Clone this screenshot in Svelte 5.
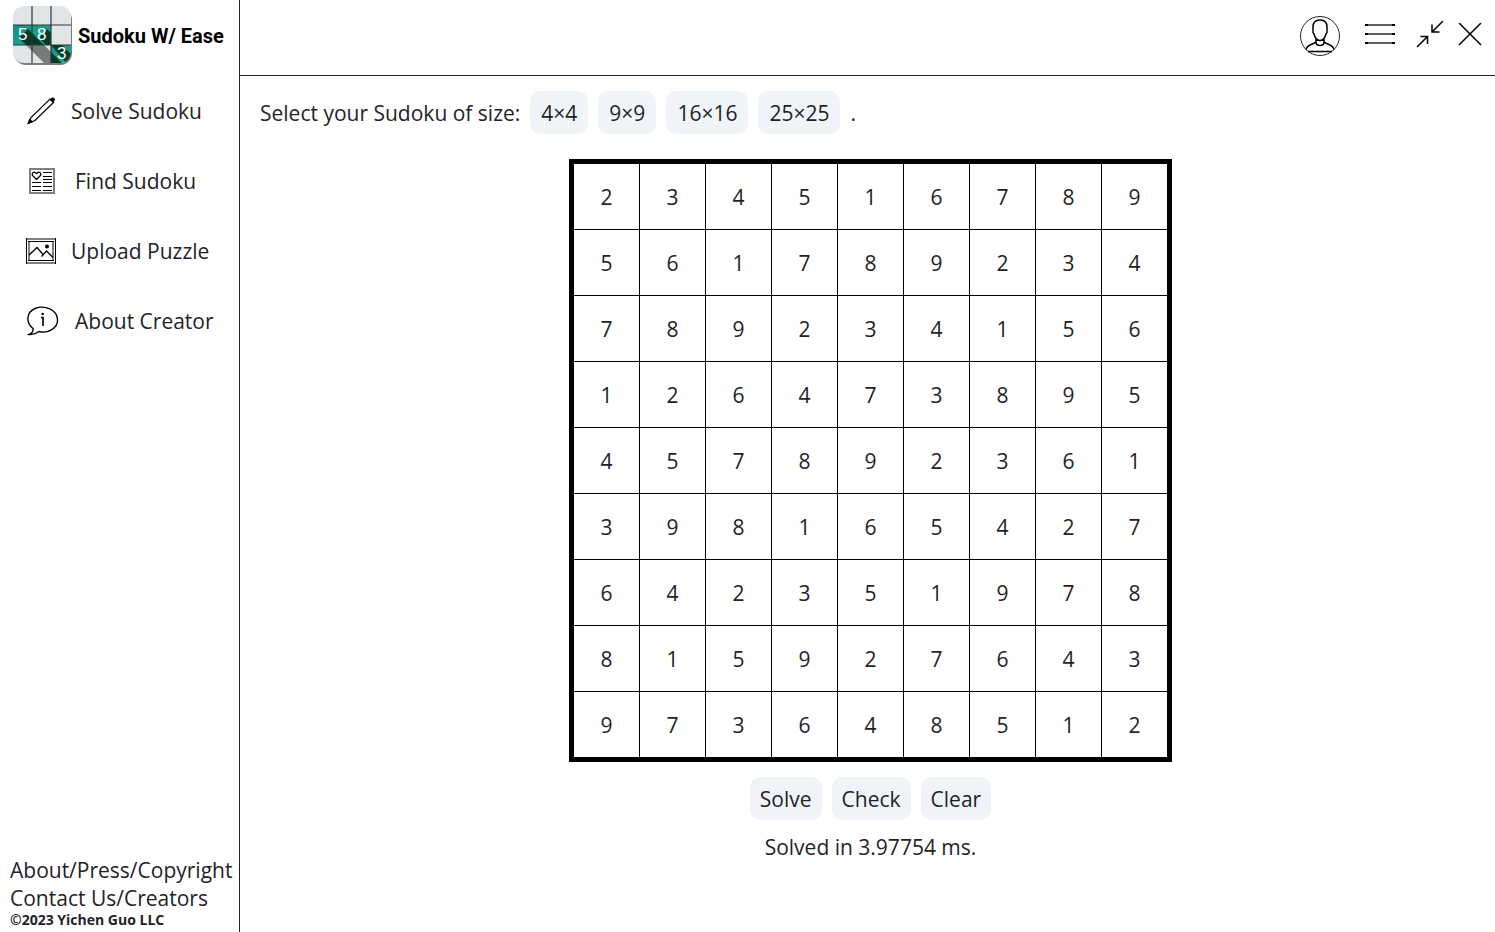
<script>
  const sizes = [4, 9, 16, 25];
  const actions = ['Solve', 'Check', 'Clear'];
  const board = [
    '234516789',
    '561789234',
    '789234156',
    '126473895',
    '457892361',
    '398165427',
    '642351978',
    '815927643',
    '973648512'
  ].map((row) => row.split(''));
</script>

<div class="app">
  <aside class="sidebar">
    <a class="brand" href="#home">
      <svg class="logo" viewBox="0 0 62 62" aria-hidden="true">
        <defs>
          <clipPath id="tile"><rect x="1" y="1" width="58" height="57" rx="11" /></clipPath>
          <linearGradient id="teal" x1="0" y1="0" x2="1" y2="1">
            <stop offset="0" stop-color="#129080" />
            <stop offset="1" stop-color="#20ad9b" />
          </linearGradient>
        </defs>
        <rect x="2" y="3" width="58" height="57" rx="12" fill="#777b7b" />
        <g clip-path="url(#tile)">
          <rect width="62" height="62" fill="#e1e5e6" />
          <rect x="0" y="20" width="39" height="20" fill="url(#teal)" />
          <rect x="39" y="40" width="20" height="20" fill="url(#teal)" />
          <path d="M7 33L16 24L32 40H14Z M27 33L35 24L39 28V40H34Z" fill="#073a24" />
          <path d="M14 40H32L51 59H33Z" fill="#777b7b" />
          <path d="M39 40H50L60 50V59H55Z M45 53L51 59H39V47Z" fill="#063d25" />
          <path d="M20 0V60M39 0V60M0 20H60M0 40H60" stroke="#303638" stroke-width="1.2" />
        </g>
        <g class="digits">
          <text x="6" y="35">5</text>
          <text x="25" y="35">8</text>
          <text x="45" y="54">3</text>
        </g>
      </svg>
      <span>Sudoku W/ Ease</span>
    </a>

    <nav>
      <a href="#solve">
        <svg width="31" height="30" viewBox="0 0 31 30" aria-hidden="true">
          <path d="M2.500 27L5 21.500L24 3L27.500 6.500L9 24.500Z" fill="none" stroke="#000" stroke-width="1.200" />
          <path d="M1 28.500L3.500 22.500L7.500 26Z" />
          <path d="M23.500 3.500L26 1.500Q28.500 1 29 3Q29 5 27 7Z" />
        </svg>
        <span>Solve Sudoku</span>
      </a>
      <a href="#find">
        <svg class="paper" width="26" height="26" viewBox="0 0 26 26" aria-hidden="true">
          <rect x="1" y="1" width="24" height="24" fill="none" stroke="#7f7f7f" stroke-width="2" />
          <path d="M7.500 11.500L3.500 7.500Q2.500 4.500 5.500 4.200L7.500 5.500L9.500 4.200Q12.500 4.500 11.500 7.500Z" fill="none" stroke="#000" stroke-width="1.300" />
          <path d="M14 4.500H23M14 8.500H23M14 11.500H23M3 14.500H12M14 14.500H23M3 18.500H12M14 18.500H23M3 22.500H12M14 22.500H23" stroke="#000" />
        </svg>
        <span>Find Sudoku</span>
      </a>
      <a href="#upload">
        <svg width="31" height="26" viewBox="0 0 31 26" aria-hidden="true">
          <path d="M0 1H30M0 25H30" stroke="#7f7f7f" stroke-width="2" />
          <path d="M.5 0V26M29.500 0V26" stroke="#000" />
          <path d="M3 3V23M27 3V23" stroke="#7f7f7f" stroke-width="2" />
          <path d="M2 3.500H28M2 22.500H28" stroke="#000" />
          <path d="M3 17L11 9.500L17.500 17M15.500 18.500L20.500 13L27 19.500" fill="none" stroke="#000" stroke-width="1.300" />
          <circle cx="21" cy="8.500" r="2" />
        </svg>
        <span>Upload Puzzle</span>
      </a>
      <a href="#about">
        <svg class="bubble" width="32" height="30" viewBox="0 0 32 30" aria-hidden="true">
          <path d="M6 22.500C-2 16 0 6 8 2.500C18-1.500 30 4 30.500 13.500C31 22 21 28 12 25.500C8 28.500 5 28.800 2 28.500C5 27 6.500 25 6 22.500Z" fill="none" stroke="#000" stroke-width="1.400" />
          <path d="M14 11.500H16V20" fill="none" stroke="#000" stroke-width="1.600" />
          <circle cx="15.700" cy="8" r="1.200" />
        </svg>
        <span>About Creator</span>
      </a>
    </nav>

    <footer>
      <a href="#press">About/Press/Copyright</a>
      <a href="#contact">Contact Us/Creators</a>
      <small>©2023 Yichen Guo LLC</small>
    </footer>
  </aside>

  <div class="page">
    <header>
      <button class="avatar" aria-label="Profile">
        <svg width="40" height="40" viewBox="0 0 40 40">
          <circle cx="20" cy="20" r="19.500" fill="none" stroke="#1f2933" />
          <path d="M20 4C15 4 13 7 13 11V15Q12.500 17 14 18C15 22 17 24.500 20 24.500S25 22 26 18Q27.500 17 27 15V11C27 7 25 4 20 4ZM16 23V26C14 28.500 7 28 6 33.500M24 23V26C26 28.500 33 28 34 33.500M16 26Q16 29.500 20 29.500T24 26M8 35.500H32" fill="none" stroke="#000" stroke-width="1.500" />
        </svg>
      </button>
      <button class="menu" aria-label="Menu">
        <svg width="30" height="22" viewBox="0 0 30 22">
          <path d="M0 1H30M0 10H30M0 19H30" stroke="#606060" stroke-width="2" />
          <path d="M0 1H3M27 1H30M0 10H3M27 10H30M0 19H3M27 19H30" stroke="#000" stroke-width="2" />
        </svg>
      </button>
      <button class="shrink" aria-label="Shrink">
        <svg width="28" height="28" viewBox="0 0 28 28">
          <path d="M1 26L11.500 15.500M4.500 15.500H11.500V23M27 0L16 11M16 3.500V11H23.500" fill="none" stroke="#000" stroke-width="1.500" />
        </svg>
      </button>
      <button aria-label="Close">
        <svg width="24" height="24" viewBox="0 0 24 24">
          <path d="M1 0L23 22M23 0L1 22" stroke="#000" stroke-width="1.500" />
        </svg>
      </button>
    </header>

    <main>
      <div class="sizes">
        <span>Select your Sudoku of size:</span>
        {#each sizes as n}
          <button class="pill">{n}×{n}</button>
        {/each}
        <span>.</span>
      </div>

      <table aria-label="Sudoku board">
        <tbody>
          {#each board as row}
            <tr>
              {#each row as cell}
                <td>{cell}</td>
              {/each}
            </tr>
          {/each}
        </tbody>
      </table>

      <div class="actions">
        {#each actions as action}
          <button class="pill">{action}</button>
        {/each}
      </div>
      <p>Solved in 3.97754 ms.</p>
    </main>
  </div>
</div>

<style>
  :global(body) {
    margin: 0;
    background: #fff;
  }

  .app {
    display: flex;
    min-height: 100vh;
    color: #1f2328;
    font: 21px/28px 'Open Sans', 'Noto Sans', sans-serif;
  }

  a {
    color: inherit;
    text-decoration: none;
  }

  button {
    padding: 0;
    border: 0;
    background: none;
    color: inherit;
    font: inherit;
    cursor: pointer;
  }

  svg {
    display: block;
    flex: none;
  }

  .sidebar {
    display: flex;
    flex: none;
    flex-direction: column;
    box-sizing: border-box;
    width: 240px;
    border-right: 1px solid #1b1f27;
  }

  .brand {
    display: flex;
    align-items: center;
    gap: 4px;
    box-sizing: border-box;
    height: 76px;
    padding: 0 0 4px 12px;
    color: #000;
    font: bold 20px/28px Roboto, sans-serif;
    white-space: nowrap;
  }

  .logo {
    width: 62px;
    height: 62px;
  }

  .digits {
    fill: #fff;
    font: 17px 'Liberation Sans', sans-serif;
  }

  nav a {
    display: flex;
    align-items: center;
    gap: 14px;
    height: 70px;
    padding-left: 26px;
    white-space: nowrap;
  }

  nav .paper {
    margin: 0 6px 0 3px;
  }

  nav .bubble {
    margin: 0 2px 0 1px;
  }

  footer {
    display: flex;
    flex-direction: column;
    margin-top: auto;
    padding: 0 0 4px 10px;
    white-space: nowrap;
  }

  small {
    font-size: 14px;
    font-weight: bold;
    line-height: 16px;
  }

  .page {
    flex: 1;
    min-width: 0;
  }

  header {
    display: flex;
    align-items: center;
    justify-content: flex-end;
    box-sizing: border-box;
    height: 76px;
    padding: 0 13px 6px 0;
    border-bottom: 1px solid #1b1f27;
  }

  header .avatar {
    margin: 2px 25px 0 0;
  }

  header .menu {
    margin-right: 21px;
  }

  header .shrink {
    margin-right: 14px;
  }

  main {
    display: flex;
    flex-direction: column;
    align-items: center;
    padding: 15px 14px 0 20px;
  }

  .sizes {
    display: flex;
    align-items: center;
    align-self: stretch;
    gap: 10px;
    margin-bottom: 25px;
  }

  .pill {
    height: 43px;
    padding: 0 10px;
    border-radius: 10px;
    background: #f0f4f8;
  }

  .sizes .pill {
    padding: 0 11px;
  }

  table {
    border: 5px solid #000;
    border-spacing: 0;
  }

  td {
    width: 65px;
    height: 65px;
    padding: 0;
    border-right: 1px solid #000;
    border-bottom: 1px solid #000;
    text-align: center;
  }

  td:last-child {
    border-right: 0;
  }

  tr:last-child td {
    border-bottom: 0;
  }

  .actions {
    display: flex;
    gap: 10px;
    margin-top: 15px;
  }

  p {
    margin: 13px 0 0;
  }
</style>
